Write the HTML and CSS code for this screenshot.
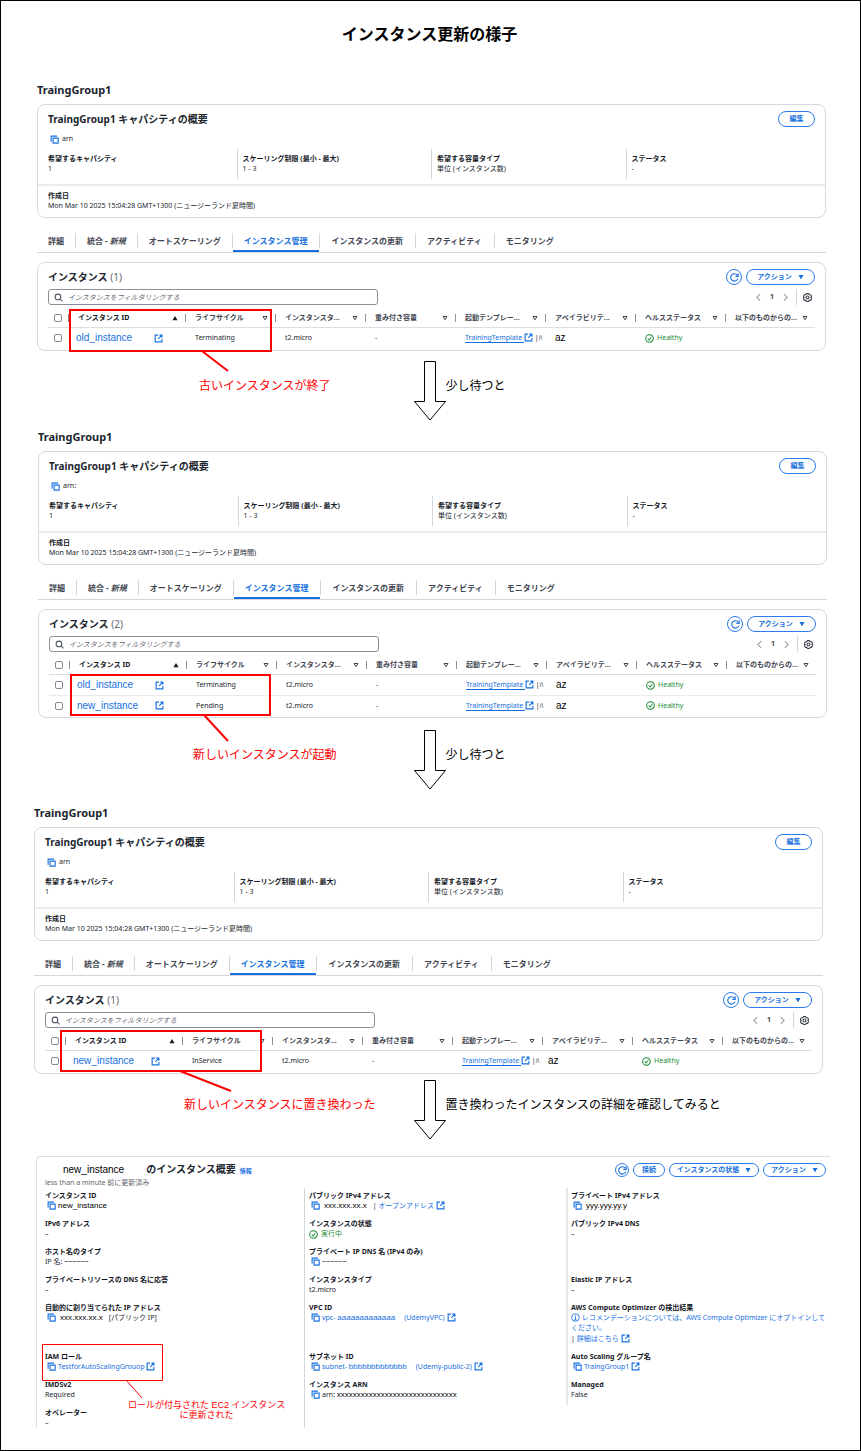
FILE: index.html
```html
<!DOCTYPE html>
<html lang="ja">
<head>
<meta charset="utf-8">
<meta name="viewport" content="width=device-width, initial-scale=1">
<title>インスタンス更新の様子</title>
<link rel="stylesheet" href="styles.css">
</head>
<body>
<svg class="defs" aria-hidden="true">
  <symbol id="copy" viewBox="0 0 16 16"><path d="M5.500 5.500h9v9h-9zM2 12V2h10.500" fill="none" stroke="currentColor" stroke-width="2"/></symbol>
  <symbol id="ext" viewBox="0 0 16 16"><path d="M7 2H2v12h12V9M9.500 2H14v4.500M14 2L7.500 8.500" fill="none" stroke="currentColor" stroke-width="2"/></symbol>
  <symbol id="ok" viewBox="0 0 16 16"><circle cx="8" cy="8" r="6.800" fill="none" stroke="currentColor" stroke-width="1.800"/><path d="M4.800 8l2.400 2.600L11.300 5.800" fill="none" stroke="currentColor" stroke-width="1.800"/></symbol>
  <symbol id="info" viewBox="0 0 16 16"><circle cx="8" cy="8" r="6.800" fill="none" stroke="currentColor" stroke-width="1.600"/><path d="M8 4v2M6.500 7.500H8V12M6 12h4" fill="none" stroke="currentColor" stroke-width="1.600"/></symbol>
  <symbol id="refresh" viewBox="0 0 16 16"><path d="M14 10A6.500 6.500 0 1 1 13 3.800M14.500 1V6H9.500" fill="none" stroke="currentColor" stroke-width="2"/></symbol>
  <symbol id="search" viewBox="0 0 16 16"><circle cx="7" cy="7" r="5" fill="none" stroke="currentColor" stroke-width="2"/><path d="M11 11l4 4" stroke="currentColor" stroke-width="2"/></symbol>
  <symbol id="gear" viewBox="0 0 16 16"><path d="M6 1h4l1 2 2.500 0L15.500 6.500 14 8l1.500 1.500L13.500 13 11 13l-1 2H6l-1-2-2.500 0L.5 9.500 2 8 .5 6.500 2.500 3 5 3z" fill="none" stroke="currentColor" stroke-width="2"/><circle cx="8" cy="8" r="2.600" fill="none" stroke="currentColor" stroke-width="2"/></symbol>
  <symbol id="prev" viewBox="0 0 16 16"><path d="M11 2L5 8l6 6" fill="none" stroke="currentColor" stroke-width="2"/></symbol>
  <symbol id="next" viewBox="0 0 16 16"><path d="M5 2l6 6-6 6" fill="none" stroke="currentColor" stroke-width="2"/></symbol>
  <symbol id="down" viewBox="0 0 12 12"><path d="M1 2h10L6 11z" fill="currentColor"/></symbol>
  <symbol id="sort" viewBox="0 0 12 12"><path d="M2 3h8L6 9.500z" fill="none" stroke="currentColor" stroke-width="2"/></symbol>
  <symbol id="up" viewBox="0 0 12 12"><path d="M1 10.500h10L6 2z" fill="currentColor"/></symbol>
  <symbol id="arrow" viewBox="0 0 32 60"><path d="M10.500.5h11v40h10L16 59 .5 40.500h10z" fill="#fff" stroke="#000"/></symbol>
</svg>

<main class="page">
  <h1 class="title">インスタンス更新の様子</h1>

  <section class="group group-a">
    <h2 class="name">TraingGroup1</h2>
    <div class="card">
      <div class="bar"><h3 class="heading">TraingGroup1 キャパシティの概要</h3><button class="pill edit">編集</button></div>
      <div class="arn"><svg class="ic"><use href="#copy"/></svg>arn</div>
      <dl class="fields">
        <div><dt>希望するキャパシティ</dt><dd>1</dd></div>
        <div><dt>スケーリング制限 (最小 - 最大)</dt><dd>1 - 3</dd></div>
        <div><dt>希望する容量タイプ</dt><dd>単位 (インスタンス数)</dd></div>
        <div><dt>ステータス</dt><dd>-</dd></div>
      </dl>
      <dl class="created"><dt>作成日</dt><dd>Mon Mar 10 2025 15:04:28 GMT+1300 (ニュージーランド夏時間)</dd></dl>
    </div>
    <nav class="tabs">
      <a href="#">詳細</a><a href="#">統合 - <em>新規</em></a><a href="#">オートスケーリング</a><a href="#" class="active" aria-current="page">インスタンス管理</a><a href="#">インスタンスの更新</a><a href="#">アクティビティ</a><a href="#">モニタリング</a>
    </nav>
    <div class="card list">
      <div class="bar"><h3 class="heading">インスタンス <span class="count">(1)</span></h3>
        <div class="actions"><button class="round" aria-label="更新"><svg class="ic"><use href="#refresh"/></svg></button><button class="pill menu">アクション<svg class="tri"><use href="#down"/></svg></button></div></div>
      <div class="tools">
        <label class="search"><svg class="ic"><use href="#search"/></svg><input type="text" aria-label="フィルター" placeholder="インスタンスをフィルタリングする"></label>
        <div class="pager"><button aria-label="前へ"><svg class="ic"><use href="#prev"/></svg></button><b>1</b><button aria-label="次へ"><svg class="ic"><use href="#next"/></svg></button><i class="rule"></i><button class="gear" aria-label="設定"><svg class="ic"><use href="#gear"/></svg></button></div>
      </div>
      <table class="grid">
        <thead><tr>
          <th class="c-check"><input type="checkbox" aria-label="すべて選択"></th>
          <th class="c-id"><div class="th on">インスタンス ID<svg class="tri"><use href="#up"/></svg></div></th>
          <th class="c-life"><div class="th">ライフサイクル<svg class="tri"><use href="#sort"/></svg></div></th>
          <th><div class="th">インスタンスタ...<svg class="tri"><use href="#sort"/></svg></div></th>
          <th><div class="th">重み付き容量<svg class="tri"><use href="#sort"/></svg></div></th>
          <th><div class="th">起動テンプレー...<svg class="tri"><use href="#sort"/></svg></div></th>
          <th><div class="th">アベイラビリテ...<svg class="tri"><use href="#sort"/></svg></div></th>
          <th><div class="th">ヘルスステータス<svg class="tri"><use href="#sort"/></svg></div></th>
          <th><div class="th">以下のものからの...<svg class="tri"><use href="#sort"/></svg></div></th>
        </tr></thead>
        <tbody><tr>
          <td class="c-check"><input type="checkbox" aria-label="old_instance"></td>
          <td class="c-id"><a class="inst" href="#"><span>old_instance</span><svg class="ic"><use href="#ext"/></svg></a></td>
          <td>Terminating</td><td>t2.micro</td><td>-</td>
          <td class="tpl"><a href="#">TrainingTemplate <svg class="ic"><use href="#ext"/></svg></a> |ﾊ</td>
          <td class="az">az</td>
          <td><span class="ok"><svg class="ic"><use href="#ok"/></svg>Healthy</span></td><td></td>
        </tr></tbody>
      </table>
    </div>
    <svg class="mark" aria-hidden="true"><path d="M33 229h201v41H33zM165 270l26 20"/></svg>
  </section>

  <div class="step step-a">
    <p class="note red">古いインスタンスが終了</p><svg class="arrow"><use href="#arrow"/></svg><p class="note">少し待つと</p>
  </div>

  <section class="group group-b">
    <h2 class="name">TraingGroup1</h2>
    <div class="card">
      <div class="bar"><h3 class="heading">TraingGroup1 キャパシティの概要</h3><button class="pill edit">編集</button></div>
      <div class="arn"><svg class="ic"><use href="#copy"/></svg>arn:</div>
      <dl class="fields">
        <div><dt>希望するキャパシティ</dt><dd>1</dd></div>
        <div><dt>スケーリング制限 (最小 - 最大)</dt><dd>1 - 3</dd></div>
        <div><dt>希望する容量タイプ</dt><dd>単位 (インスタンス数)</dd></div>
        <div><dt>ステータス</dt><dd>-</dd></div>
      </dl>
      <dl class="created"><dt>作成日</dt><dd>Mon Mar 10 2025 15:04:28 GMT+1300 (ニュージーランド夏時間)</dd></dl>
    </div>
    <nav class="tabs">
      <a href="#">詳細</a><a href="#">統合 - <em>新規</em></a><a href="#">オートスケーリング</a><a href="#" class="active" aria-current="page">インスタンス管理</a><a href="#">インスタンスの更新</a><a href="#">アクティビティ</a><a href="#">モニタリング</a>
    </nav>
    <div class="card list">
      <div class="bar"><h3 class="heading">インスタンス <span class="count">(2)</span></h3>
        <div class="actions"><button class="round" aria-label="更新"><svg class="ic"><use href="#refresh"/></svg></button><button class="pill menu">アクション<svg class="tri"><use href="#down"/></svg></button></div></div>
      <div class="tools">
        <label class="search"><svg class="ic"><use href="#search"/></svg><input type="text" aria-label="フィルター" placeholder="インスタンスをフィルタリングする"></label>
        <div class="pager"><button aria-label="前へ"><svg class="ic"><use href="#prev"/></svg></button><b>1</b><button aria-label="次へ"><svg class="ic"><use href="#next"/></svg></button><i class="rule"></i><button class="gear" aria-label="設定"><svg class="ic"><use href="#gear"/></svg></button></div>
      </div>
      <table class="grid">
        <thead><tr>
          <th class="c-check"><input type="checkbox" aria-label="すべて選択"></th>
          <th class="c-id"><div class="th on">インスタンス ID<svg class="tri"><use href="#up"/></svg></div></th>
          <th class="c-life"><div class="th">ライフサイクル<svg class="tri"><use href="#sort"/></svg></div></th>
          <th><div class="th">インスタンスタ...<svg class="tri"><use href="#sort"/></svg></div></th>
          <th><div class="th">重み付き容量<svg class="tri"><use href="#sort"/></svg></div></th>
          <th><div class="th">起動テンプレー...<svg class="tri"><use href="#sort"/></svg></div></th>
          <th><div class="th">アベイラビリテ...<svg class="tri"><use href="#sort"/></svg></div></th>
          <th><div class="th">ヘルスステータス<svg class="tri"><use href="#sort"/></svg></div></th>
          <th><div class="th">以下のものからの...<svg class="tri"><use href="#sort"/></svg></div></th>
        </tr></thead>
        <tbody><tr>
          <td class="c-check"><input type="checkbox" aria-label="old_instance"></td>
          <td class="c-id"><a class="inst" href="#"><span>old_instance</span><svg class="ic"><use href="#ext"/></svg></a></td>
          <td>Terminating</td><td>t2.micro</td><td>-</td>
          <td class="tpl"><a href="#">TrainingTemplate <svg class="ic"><use href="#ext"/></svg></a> |ﾊ</td>
          <td class="az">az</td>
          <td><span class="ok"><svg class="ic"><use href="#ok"/></svg>Healthy</span></td><td></td>
        </tr><tr>
          <td class="c-check"><input type="checkbox" aria-label="new_instance"></td>
          <td class="c-id"><a class="inst" href="#"><span>new_instance</span><svg class="ic"><use href="#ext"/></svg></a></td>
          <td>Pending</td><td>t2.micro</td><td>-</td>
          <td class="tpl"><a href="#">TrainingTemplate <svg class="ic"><use href="#ext"/></svg></a> |ﾊ</td>
          <td class="az">az</td>
          <td><span class="ok"><svg class="ic"><use href="#ok"/></svg>Healthy</span></td><td></td>
        </tr></tbody>
      </table>
    </div>
    <svg class="mark" aria-hidden="true"><path d="M33 247h199v40H33zM166 287l24 26"/></svg>
  </section>

  <div class="step step-b">
    <p class="note red">新しいインスタンスが起動</p><svg class="arrow"><use href="#arrow"/></svg><p class="note">少し待つと</p>
  </div>

  <section class="group group-c">
    <h2 class="name">TraingGroup1</h2>
    <div class="card">
      <div class="bar"><h3 class="heading">TraingGroup1 キャパシティの概要</h3><button class="pill edit">編集</button></div>
      <div class="arn"><svg class="ic"><use href="#copy"/></svg>arn</div>
      <dl class="fields">
        <div><dt>希望するキャパシティ</dt><dd>1</dd></div>
        <div><dt>スケーリング制限 (最小 - 最大)</dt><dd>1 - 3</dd></div>
        <div><dt>希望する容量タイプ</dt><dd>単位 (インスタンス数)</dd></div>
        <div><dt>ステータス</dt><dd>-</dd></div>
      </dl>
      <dl class="created"><dt>作成日</dt><dd>Mon Mar 10 2025 15:04:28 GMT+1300 (ニュージーランド夏時間)</dd></dl>
    </div>
    <nav class="tabs">
      <a href="#">詳細</a><a href="#">統合 - <em>新規</em></a><a href="#">オートスケーリング</a><a href="#" class="active" aria-current="page">インスタンス管理</a><a href="#">インスタンスの更新</a><a href="#">アクティビティ</a><a href="#">モニタリング</a>
    </nav>
    <div class="card list">
      <div class="bar"><h3 class="heading">インスタンス <span class="count">(1)</span></h3>
        <div class="actions"><button class="round" aria-label="更新"><svg class="ic"><use href="#refresh"/></svg></button><button class="pill menu">アクション<svg class="tri"><use href="#down"/></svg></button></div></div>
      <div class="tools">
        <label class="search"><svg class="ic"><use href="#search"/></svg><input type="text" aria-label="フィルター" placeholder="インスタンスをフィルタリングする"></label>
        <div class="pager"><button aria-label="前へ"><svg class="ic"><use href="#prev"/></svg></button><b>1</b><button aria-label="次へ"><svg class="ic"><use href="#next"/></svg></button><i class="rule"></i><button class="gear" aria-label="設定"><svg class="ic"><use href="#gear"/></svg></button></div>
      </div>
      <table class="grid">
        <thead><tr>
          <th class="c-check"><input type="checkbox" aria-label="すべて選択"></th>
          <th class="c-id"><div class="th on">インスタンス ID<svg class="tri"><use href="#up"/></svg></div></th>
          <th class="c-life"><div class="th">ライフサイクル<svg class="tri"><use href="#sort"/></svg></div></th>
          <th><div class="th">インスタンスタ...<svg class="tri"><use href="#sort"/></svg></div></th>
          <th><div class="th">重み付き容量<svg class="tri"><use href="#sort"/></svg></div></th>
          <th><div class="th">起動テンプレー...<svg class="tri"><use href="#sort"/></svg></div></th>
          <th><div class="th">アベイラビリテ...<svg class="tri"><use href="#sort"/></svg></div></th>
          <th><div class="th">ヘルスステータス<svg class="tri"><use href="#sort"/></svg></div></th>
          <th><div class="th">以下のものからの...<svg class="tri"><use href="#sort"/></svg></div></th>
        </tr></thead>
        <tbody><tr>
          <td class="c-check"><input type="checkbox" aria-label="new_instance"></td>
          <td class="c-id"><a class="inst" href="#"><span>new_instance</span><svg class="ic"><use href="#ext"/></svg></a></td>
          <td>InService</td><td>t2.micro</td><td>-</td>
          <td class="tpl"><a href="#">TrainingTemplate <svg class="ic"><use href="#ext"/></svg></a> |ﾊ</td>
          <td class="az">az</td>
          <td><span class="ok"><svg class="ic"><use href="#ok"/></svg>Healthy</span></td><td></td>
        </tr></tbody>
      </table>
    </div>
    <svg class="mark" aria-hidden="true"><path d="M27 227h200v40H27zM146 267l51 20"/></svg>
  </section>

  <div class="step step-c">
    <p class="note red">新しいインスタンスに置き換わった</p><svg class="arrow"><use href="#arrow"/></svg><p class="note">置き換わったインスタンスの詳細を確認してみると</p>
  </div>

  <section class="detail">
    <div class="detail-bar">
      <h2 class="heading"><span class="plain">new_instance</span>のインスタンス概要<a href="#" class="tiny">情報</a></h2>
      <div class="actions"><button class="round" aria-label="更新"><svg class="ic"><use href="#refresh"/></svg></button><button class="pill connect">接続</button><button class="pill state">インスタンスの状態<svg class="tri"><use href="#down"/></svg></button><button class="pill act">アクション<svg class="tri"><use href="#down"/></svg></button></div>
    </div>
    <p class="updated">less than a minute 前に更新済み</p>
    <div class="facts">
      <dl><dt>インスタンス ID</dt><dd><svg class="ic copy"><use href="#copy"/></svg><span class="plain">new_instance</span></dd></dl>
      <dl><dt>パブリック IPv4 アドレス</dt><dd><svg class="ic copy"><use href="#copy"/></svg><span class="plain pad">xxx.xxx.xx.x</span>| <a href="#">オープンアドレス <svg class="ic"><use href="#ext"/></svg></a></dd></dl>
      <dl><dt>プライベート IPv4 アドレス</dt><dd><svg class="ic copy"><use href="#copy"/></svg><span class="plain pad">yyy.yyy.yy.y</span></dd></dl>

      <dl><dt>IPv6 アドレス</dt><dd>–</dd></dl>
      <dl><dt>インスタンスの状態</dt><dd><span class="ok"><svg class="ic"><use href="#ok"/></svg>実行中</span></dd></dl>
      <dl><dt>パブリック IPv4 DNS</dt><dd>–</dd></dl>

      <dl><dt>ホスト名のタイプ</dt><dd>IP 名: <span class="wave">~~~~~~</span></dd></dl>
      <dl><dt>プライベート IP DNS 名 (IPv4 のみ)</dt><dd><svg class="ic copy"><use href="#copy"/></svg><span class="wave">~~~~~~</span></dd></dl>
      <dl></dl>

      <dl><dt>プライベートリソースの DNS 名に応答</dt><dd>–</dd></dl>
      <dl><dt>インスタンスタイプ</dt><dd>t2.micro</dd></dl>
      <dl><dt>Elastic IP アドレス</dt><dd>–</dd></dl>

      <dl><dt>自動的に割り当てられた IP アドレス</dt><dd><svg class="ic copy"><use href="#copy"/></svg><span class="plain pad">xxx.xxx.xx.x</span>[パブリック IP]</dd></dl>
      <dl><dt>VPC ID</dt><dd><svg class="ic copy"><use href="#copy"/></svg><a href="#">vpc- <span class="plain after">aaaaaaaaaaaaa</span>(UdemyVPC) <svg class="ic"><use href="#ext"/></svg></a></dd></dl>
      <dl><dt>AWS Compute Optimizer の検出結果</dt><dd><a href="#"><svg class="ic"><use href="#info"/></svg> レコメンデーションについては、AWS Compute Optimizer にオプトインしてください。</a></dd><dd class="more">| <a href="#">詳細はこちら <svg class="ic"><use href="#ext"/></svg></a></dd></dl>

      <dl class="iam"><dt>IAM ロール</dt><dd><svg class="ic copy"><use href="#copy"/></svg><a href="#">TestforAutoScalingGrouop <svg class="ic"><use href="#ext"/></svg></a></dd>
        <dd class="callout"><svg class="frame" aria-hidden="true"><path d="M2.500.5h120v36H2.500zM87 37l15 17"/></svg><p>ロールが付与された EC2 インスタンス<br>に更新された</p></dd></dl>
      <dl><dt>サブネット ID</dt><dd><svg class="ic copy"><use href="#copy"/></svg><a href="#">subnet- <span class="plain after">bbbbbbbbbbbbb</span>(Udemy-public-2) <svg class="ic"><use href="#ext"/></svg></a></dd></dl>
      <dl><dt>Auto Scaling グループ名</dt><dd><svg class="ic copy"><use href="#copy"/></svg><a href="#">TraingGroup1 <svg class="ic"><use href="#ext"/></svg></a></dd></dl>

      <dl><dt>IMDSv2</dt><dd>Required</dd></dl>
      <dl><dt>インスタンス ARN</dt><dd><svg class="ic copy"><use href="#copy"/></svg>arn: <span class="plain">xxxxxxxxxxxxxxxxxxxxxxxxxxxxxx</span></dd></dl>
      <dl><dt>Managed</dt><dd>False</dd></dl>

      <dl class="last"><dt>オペレーター</dt><dd>–</dd></dl>
      <dl class="last"></dl>
      <dl class="last open"></dl>
    </div>
  </section>
</main>
</body>
</html>
```

FILE: styles.css
```css
* { box-sizing: border-box; }
body, h1, h2, h3, p, dl, dd { margin: 0; }
body {
  background: #fff;
  color: #21262e;
  font-family: "Noto Sans", "Noto Sans CJK JP", sans-serif;
  font-size: 7px;
  line-height: 10px;
}
a { color: #1670e0; text-decoration: none; }
button {
  padding: 0;
  border: 0;
  background: none;
  color: inherit;
  font: inherit;
}
.defs { position: absolute; width: 0; height: 0; }
.ic { width: 9px; height: 9px; flex: none; vertical-align: -2px; }
.tri { width: 6px; height: 6px; flex: none; }

.page { min-height: 100vh; border: 1px solid #000; padding-bottom: 20px; }
.title {
  padding: 22px 2px 0 0;
  color: #000;
  font-family: "Noto Sans CJK JP", sans-serif;
  font-size: 16px;
  line-height: 20px;
  text-align: center;
}

/* Auto Scaling group panels */
.group { position: relative; }
.group-a { margin: 38px 34px 0 36px; }
.group-b { margin: 0 33px 0 37px; }
.group-c { margin: 0 37px 0 33px; }
.name { font-size: 11px; line-height: 18px; margin-bottom: 5px; }
.card { border: 1px solid #d8d9dc; border-radius: 8px; padding: 6px 10px; }
.bar { display: flex; justify-content: space-between; align-items: center; height: 16px; }
.heading { font-size: 10px; line-height: 16px; }
.count { color: #5f6670; font-weight: 400; }
.arn { display: flex; align-items: center; gap: 3px; margin: 7px 0 5px 2px; }
.arn .ic, .copy { color: #1670e0; }
dt { font-weight: 700; color: #14181f; }

.pill, .round {
  display: flex;
  align-items: center;
  justify-content: center;
  height: 16px;
  border: 1px solid #2b7cec;
  border-radius: 8px;
  color: #1670e0;
  font-weight: 700;
  white-space: nowrap;
}
.round { width: 16px; }
.edit { width: 37px; }
.menu { width: 69px; gap: 6px; }
.actions { display: flex; gap: 4px; }

.fields { display: grid; grid-template-columns: repeat(4, 1fr); column-gap: 11px; margin-bottom: 5px; }
.fields div { padding: 5px 0; }
.fields div + div { margin-left: -6px; padding-left: 5px; border-left: 1px solid #d4d6da; }
.created { margin: 0 -10px; padding: 5px 10px 0; border-top: 2px solid #ebebed; }

.tabs { display: flex; margin-top: 15px; border-bottom: 1px solid #d4d6da; }
.tabs a {
  position: relative;
  padding: 0 11px 4px 12px;
  color: #424650;
  font-size: 8px;
  font-weight: 700;
  line-height: 15px;
}
.tabs a:first-child { padding-left: 11px; }
.tabs a:nth-child(n+4) { padding-right: 12px; }
.tabs a + a::before {
  content: "";
  position: absolute;
  left: 0;
  top: 0;
  width: 1px;
  height: 15px;
  background: #d4d6da;
}
.tabs .active { color: #1670e0; }
.tabs .active::after {
  content: "";
  position: absolute;
  left: 1px;
  right: 0;
  bottom: 0;
  height: 2px;
  background: #1670e0;
}

.list { margin-top: 9px; padding-bottom: 2px; }
.tools { display: flex; justify-content: space-between; align-items: center; margin-top: 4px; }
.search {
  display: flex;
  align-items: center;
  gap: 5px;
  width: 43%;
  height: 16px;
  padding: 0 5px;
  border: 1px solid #8c8f98;
  border-radius: 3px;
  color: #555a66;
}
.search input { flex: 1; min-width: 0; border: 0; padding: 0; background: none; outline: 0; font: inherit; height: 12px; }
.search input::placeholder { color: #656a76; font-style: italic; opacity: 1; }
.pager { display: flex; align-items: center; gap: 6px; padding-right: 3px; color: #424650; }
.pager button { display: flex; color: #a0a4ac; }
.pager .gear { color: #424650; }
.pager b { width: 6px; text-align: center; }
.rule { width: 1px; height: 16px; background: #d4d6da; }

.grid { width: 100%; border-collapse: separate; border-spacing: 0; table-layout: fixed; }
.grid th { height: 23px; padding: 3px 0 0; border-bottom: 1px solid #dcdde0; text-align: left; }
.grid td { height: 20px; padding: 0 0 0 10px; overflow: hidden; white-space: nowrap; }
.grid tr + tr td { border-top: 1px solid #ebebee; }
.grid .c-check { width: 20px; padding-left: 6px; }
.grid th.c-id { width: 117px; }
.grid th.c-life { width: 90px; }
.grid td.c-id { padding-left: 8px; }
.th {
  display: flex;
  justify-content: space-between;
  align-items: center;
  padding: 0 7px 0 9px;
  border-left: 1px solid #8f939b;
  color: #424650;
  line-height: 8px;
  white-space: nowrap;
}
.th.on { color: #14181f; }
input[type="checkbox"] {
  appearance: none;
  display: block;
  width: 8px;
  height: 8px;
  margin: 0;
  border: 1px solid #858993;
  border-radius: 2px;
}
.inst { display: flex; align-items: center; font-family: "Liberation Sans", sans-serif; font-size: 10px; }
.inst span { width: 78px; }
.tpl a { text-decoration: underline; text-underline-offset: 2px; }
.grid .az { color: #000; font-family: "Liberation Sans", sans-serif; font-size: 10px; }
.group-c .grid .az { padding-left: 6px; }
.ok { display: flex; align-items: center; gap: 3px; color: #1b8a36; }

.mark { position: absolute; left: 0; top: 0; width: 240px; height: 320px; pointer-events: none; }
.mark path { fill: none; stroke: #f00; stroke-width: 2; }

/* Steps between the panels */
.step { display: grid; grid-template-columns: 1fr 32px 1fr; padding-right: 2px; color: #000; }
.step-a { padding-top: 10px; padding-bottom: 7px; }
.step-b { padding-top: 12px; padding-bottom: 14px; }
.step-c { padding-top: 6px; padding-bottom: 16px; }
.arrow { width: 32px; height: 60px; }
.note { padding-top: 15px; font-family: "Noto Sans CJK JP", sans-serif; font-size: 12px; line-height: 18px; white-space: nowrap; }
.red { color: #f00; }
.step-a .red { padding-left: 198px; }
.step-b .red { padding-left: 192px; }
.step-c .red { padding-left: 183px; }

/* Instance summary */
.detail {
  margin: 0 30px 0 35px;
  padding: 5px 0 0 3px;
  border: solid #dcdde0;
  border-width: 1px 0 0 1px;
  border-top-left-radius: 5px;
}
.detail-bar { display: flex; justify-content: space-between; align-items: center; padding: 0 4px 0 23px; height: 16px; }
.detail .plain { color: #000; font-family: "Liberation Sans", sans-serif; font-weight: 400; font-size: 8px; }
.detail .heading .plain { margin-right: 22px; font-size: 10px; }
.tiny { margin-left: 4px; font-size: 6px; }
.detail .pill, .detail .round { height: 14px; }
.detail .round { width: 14px; }
.connect { width: 32px; }
.state { width: 90px; gap: 6px; }
.act { width: 63px; gap: 6px; }
.updated { padding-left: 5px; color: #5f6670; }
.facts { display: grid; grid-template-columns: 264fr 262fr 264fr; }
.facts dl { padding: 3px 0 5px 5px; }
.facts dl:nth-child(3n+2) { padding-left: 4px; border-left: 1px solid #d4d6da; }
.facts dl:nth-child(3n) { padding-left: 3px; border-left: 2px solid #e6e7e9; }
.facts dl.open { border-left-color: transparent; }
.facts dl.last { padding-bottom: 0; }
.facts dd { height: 10px; }
.facts dl dd:nth-of-type(1):nth-last-of-type(2) { height: auto; }
.facts .copy { margin: 0 2px; }
.facts .pad { margin: 0 6px 0 2px; }
.facts a .plain { margin-right: 9px; color: #1670e0; }
.facts .wave { color: #000; font-family: "Liberation Sans", sans-serif; }
.facts .more { margin-top: 1px; }
.iam { position: relative; }
.facts .callout { position: absolute; left: 0; top: -5px; height: auto; color: #f00; }
.frame { display: block; width: 124px; height: 56px; }
.frame path { fill: none; stroke: #f00; stroke-width: 1; }
.callout p { padding-left: 88px; font-family: "Liberation Sans", "Noto Sans CJK JP", sans-serif; font-size: 9px; text-align: center; white-space: nowrap; }
```
